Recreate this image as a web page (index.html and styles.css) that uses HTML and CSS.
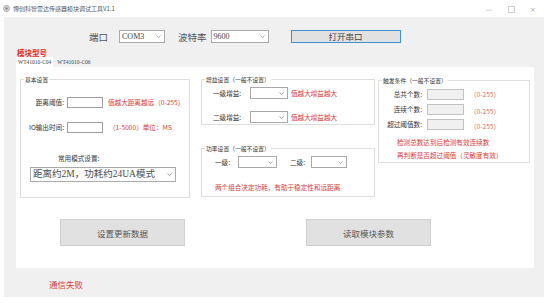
FILE: index.html
```html
<!DOCTYPE html>
<html lang="zh-CN">
<head>
  <meta charset="UTF-8">
  <meta name="viewport" content="width=device-width, initial-scale=1.0">
  <title>雷达传感器模块调试工具</title>
  <link rel="stylesheet" href="styles.css">
</head>
<body>
  <div class="window">
    <div class="titlebar">
      <svg class="app-icon" width="7" height="7" viewBox="0 0 7 7">
        <circle cx="3.5" cy="3.5" r="3" fill="#d8d8d8" stroke="#9a9a9a" stroke-width="0.8"/>
        <circle cx="3.5" cy="3.5" r="1.2" fill="#8a8a8a"/>
      </svg>
      <span class="app-title">博创科智雷达传感器模块调试工具V1.1</span>
      <div class="win-controls">
        <span class="win-btn">&#8212;</span>
        <span class="win-btn max"></span>
        <span class="win-btn">&#215;</span>
      </div>
    </div>

    <div class="client">
      <div class="port-row">
        <span class="port-label">端口</span>
        <div class="combo combo-port">
          <span>COM3</span>
          <svg class="chev" width="5" height="3" viewBox="0 0 5 3"><path d="M0.5 0.5 L2.5 2.5 L4.5 0.5" fill="none" stroke="#888" stroke-width="0.7"/></svg>
        </div>
        <span class="port-label baud-label">波特率</span>
        <div class="combo combo-baud">
          <span>9600</span>
          <svg class="chev" width="5" height="3" viewBox="0 0 5 3"><path d="M0.5 0.5 L2.5 2.5 L4.5 0.5" fill="none" stroke="#888" stroke-width="0.7"/></svg>
        </div>
        <button class="open-btn">打开串口</button>
      </div>

      <div class="model-label">模块型号</div>
      <div class="tabs">
        <span class="tab active">WT41010-C04</span>
        <span class="tab">WT41010-C06</span>
      </div>

      <div class="tab-panel">
        <div class="groups">
          <div class="group basic">
            <span class="group-title">基本设置</span>
            <div class="row">
              <span class="lbl">距离阈值:</span>
              <input class="field" type="text">
              <span class="note">值越大距离越远（0-255）</span>
            </div>
            <div class="row row-io">
              <span class="lbl">IO输出时间:</span>
              <input class="field" type="text">
              <span class="note note-io">（1-5000）单位：MS</span>
            </div>
            <div class="mode-label">常用模式设置:</div>
            <div class="combo combo-mode">
              <span>距离约2M，功耗约24UA模式</span>
              <svg class="chev" width="5" height="3" viewBox="0 0 5 3"><path d="M0.5 0.5 L2.5 2.5 L4.5 0.5" fill="none" stroke="#888" stroke-width="0.7"/></svg>
            </div>
          </div>

          <div class="mid-col">
            <div class="group gain">
              <span class="group-title">增益设置（一般不设置）</span>
              <div class="row">
                <span class="lbl-gain">一级增益:</span>
                <div class="combo combo-gain"><span></span>
                  <svg class="chev" width="5" height="3" viewBox="0 0 5 3"><path d="M0.5 0.5 L2.5 2.5 L4.5 0.5" fill="none" stroke="#888" stroke-width="0.7"/></svg>
                </div>
                <span class="note note-gain">值越大增益越大</span>
              </div>
              <div class="row row-gain2">
                <span class="lbl-gain">二级增益:</span>
                <div class="combo combo-gain"><span></span>
                  <svg class="chev" width="5" height="3" viewBox="0 0 5 3"><path d="M0.5 0.5 L2.5 2.5 L4.5 0.5" fill="none" stroke="#888" stroke-width="0.7"/></svg>
                </div>
                <span class="note note-gain">值越大增益越大</span>
              </div>
            </div>

            <div class="group power">
              <span class="group-title">功率设置（一般不设置）</span>
              <div class="row">
                <span class="lbl-power">一级:</span>
                <div class="combo combo-p1"><span></span>
                  <svg class="chev" width="5" height="3" viewBox="0 0 5 3"><path d="M0.5 0.5 L2.5 2.5 L4.5 0.5" fill="none" stroke="#888" stroke-width="0.7"/></svg>
                </div>
                <span class="lbl-power lbl-p2">二级:</span>
                <div class="combo combo-p2"><span></span>
                  <svg class="chev" width="5" height="3" viewBox="0 0 5 3"><path d="M0.5 0.5 L2.5 2.5 L4.5 0.5" fill="none" stroke="#888" stroke-width="0.7"/></svg>
                </div>
              </div>
              <div class="note power-note">两个组合决定功耗，有助于稳定性和远距离</div>
            </div>
          </div>

          <div class="group trigger">
            <span class="group-title">触发条件（一般不设置）</span>
            <div class="row">
              <span class="lbl-trig">总共个数:</span>
              <input class="field field-off" type="text" disabled>
              <span class="range">（0-255）</span>
            </div>
            <div class="row row-trig">
              <span class="lbl-trig">连续个数:</span>
              <input class="field field-off" type="text" disabled>
              <span class="range range-low">（0-255）</span>
            </div>
            <div class="row row-trig">
              <span class="lbl-trig">超过阈值数:</span>
              <input class="field field-off" type="text" disabled>
              <span class="range range-low">（0-255）</span>
            </div>
            <div class="note trig-note">检测总数达到后检测有效连续数<br>再判断是否超过阈值（灵敏度有效）</div>
          </div>
        </div>

        <div class="actions">
          <button class="action-btn">设置更新数据</button>
          <button class="action-btn">读取模块参数</button>
        </div>
      </div>

      <div class="status">通信失败</div>
    </div>
  </div>
</body>
</html>
```

FILE: styles.css
```css
body {
  margin: 0;
  background: #fff;
  font-family: "Noto Sans CJK SC", "Liberation Sans", sans-serif;
  color: #333;
}
.window {
  width: 548px;
  height: 303px;
  overflow: hidden;
}
.titlebar {
  height: 17px;
  display: flex;
  align-items: center;
  padding-left: 3px;
  font-size: 6px;
  color: #555;
}
.app-icon {
  margin-right: 3px;
}
.win-controls {
  margin-left: auto;
  display: flex;
  align-items: center;
  padding-right: 4px;
  padding-top: 3px;
}
.win-btn {
  width: 22px;
  text-align: center;
  font-size: 7px;
  color: #aaa;
  font-family: "DejaVu Sans", sans-serif;
}
.win-btn.max::before {
  content: "";
  display: inline-block;
  width: 5px;
  height: 5px;
  border: 1px solid #d0d0d0;
}
.client {
  margin: 0 4px;
  height: 280px;
  background: #f0f0f0;
}
.port-row {
  display: flex;
  align-items: center;
  padding: 13px 0 0 85px;
  height: 13px;
}
.port-label {
  font-size: 9.5px;
  color: #555;
  font-family: "Noto Sans CJK SC", sans-serif;
  margin-right: 11px;
}
.baud-label {
  margin-left: 13px;
  margin-right: 4px;
}
.combo {
  box-sizing: border-box;
  display: flex;
  align-items: center;
  justify-content: space-between;
  background: #fff;
  border: 1px solid #aaa;
  height: 12px;
  padding: 0 3px 0 2px;
  font-family: "Liberation Serif", "Noto Sans CJK SC", serif;
  font-size: 8px;
  color: #444;
}
.combo-port {
  width: 46px;
  height: 13px;
}
.combo-baud {
  width: 58px;
  height: 13px;
}
.open-btn {
  box-sizing: border-box;
  margin-left: 22px;
  width: 110px;
  height: 13px;
  padding: 0;
  background: #e1e1e1;
  border: 1px solid #3d8fd6;
  font-family: "Noto Sans CJK SC", sans-serif;
  font-size: 8.5px;
  line-height: 11px;
  color: #444;
}
.model-label {
  margin-top: 5px;
  padding-left: 13px;
  font-size: 7.5px;
  line-height: 9px;
  font-weight: bold;
  color: #e02a2a;
}
.tabs {
  display: flex;
  padding-left: 12px;
  height: 10px;
  align-items: stretch;
}
.tab {
  font-family: "Liberation Serif", serif;
  font-size: 5.5px;
  line-height: 11px;
  padding: 0 2px;
  margin-right: 2px;
  color: #444;
}
.tab.active {
  background: #fff;
}
.tab-panel {
  margin-left: 12px;
  width: 518px;
  height: 201px;
  background: #fff;
}
.groups {
  display: flex;
  align-items: flex-start;
  padding: 12px 0 0 4px;
}
.group {
  box-sizing: border-box;
  position: relative;
  border: 1px solid #dedede;
  font-size: 6.6px;
  line-height: 9px;
}
.group-title {
  position: absolute;
  top: -5px;
  left: 3px;
  padding: 0 1px;
  background: #fff;
  font-size: 5.8px;
  line-height: 9px;
  color: #333;
}
.row {
  display: flex;
  align-items: center;
}
.field {
  box-sizing: border-box;
  margin: 0;
  padding: 0;
  height: 11px;
  border: 1px solid #9e9e9e;
  background: #fff;
}
.note {
  color: #e03a3a;
}
.basic {
  width: 170px;
  height: 119px;
  margin-right: 11px;
  padding-top: 17px;
}
.basic .lbl {
  width: 43px;
  text-align: right;
  white-space: nowrap;
}
.basic .field {
  width: 36px;
  margin-left: 3px;
}
.basic .note {
  margin-left: 5px;
  white-space: nowrap;
}
.basic .note-io {
  margin-left: 6px;
}
.row-io {
  margin-top: 14px;
}
.mode-label {
  margin-top: 21px;
  padding-left: 37px;
}
.combo-mode {
  margin: 4px 0 0 9px;
  width: 146px;
  height: 15px;
  font-size: 9.5px;
  color: #4a4a4a;
}
.mid-col {
  display: flex;
  flex-direction: column;
  width: 174px;
  margin-right: 3px;
}
.gain {
  height: 46px;
  padding: 7px 0 0 11px;
}
.lbl-gain {
  width: 33px;
}
.combo-gain {
  width: 38px;
  margin-left: 4px;
}
.note-gain {
  margin-left: 3px;
}
.row-gain2 {
  margin-top: 12px;
}
.power {
  margin-top: 23px;
  height: 49px;
  padding: 7px 0 0 13px;
}
.lbl-power {
  width: 20px;
}
.lbl-p2 {
  margin-left: 13px;
  width: 18px;
}
.combo-p1 {
  width: 39px;
  margin-left: 3px;
}
.combo-p2 {
  width: 36px;
  margin-left: 3px;
}
.power-note {
  margin-top: 15px;
  white-space: nowrap;
}
.trigger {
  width: 152px;
  height: 83px;
  margin-top: 1px;
  padding-top: 8px;
}
.lbl-trig {
  width: 43px;
  text-align: right;
  white-space: nowrap;
}
.field-off {
  width: 37px;
  margin-left: 5px;
  background: #f0f0f0;
  border-color: #c2c2c2;
}
.range {
  margin-left: 6px;
  color: #e86a6a;
  white-space: nowrap;
}
.range-low {
  position: relative;
  top: 2px;
}
.row-trig {
  margin-top: 4px;
}
.trig-note {
  margin-top: 6px;
  padding-left: 18px;
  line-height: 13px;
  white-space: nowrap;
}
.actions {
  display: flex;
  gap: 121px;
  padding: 21px 0 0 44px;
}
.action-btn {
  box-sizing: border-box;
  width: 125px;
  height: 27px;
  padding: 0;
  background: #e1e1e1;
  border: 1px solid #cfcfcf;
  font-family: "Noto Sans CJK SC", sans-serif;
  font-size: 8.5px;
  color: #555;
}
.status {
  padding: 10px 0 0 45px;
  font-size: 8.5px;
  line-height: 12px;
  color: #e03a3a;
}
```
